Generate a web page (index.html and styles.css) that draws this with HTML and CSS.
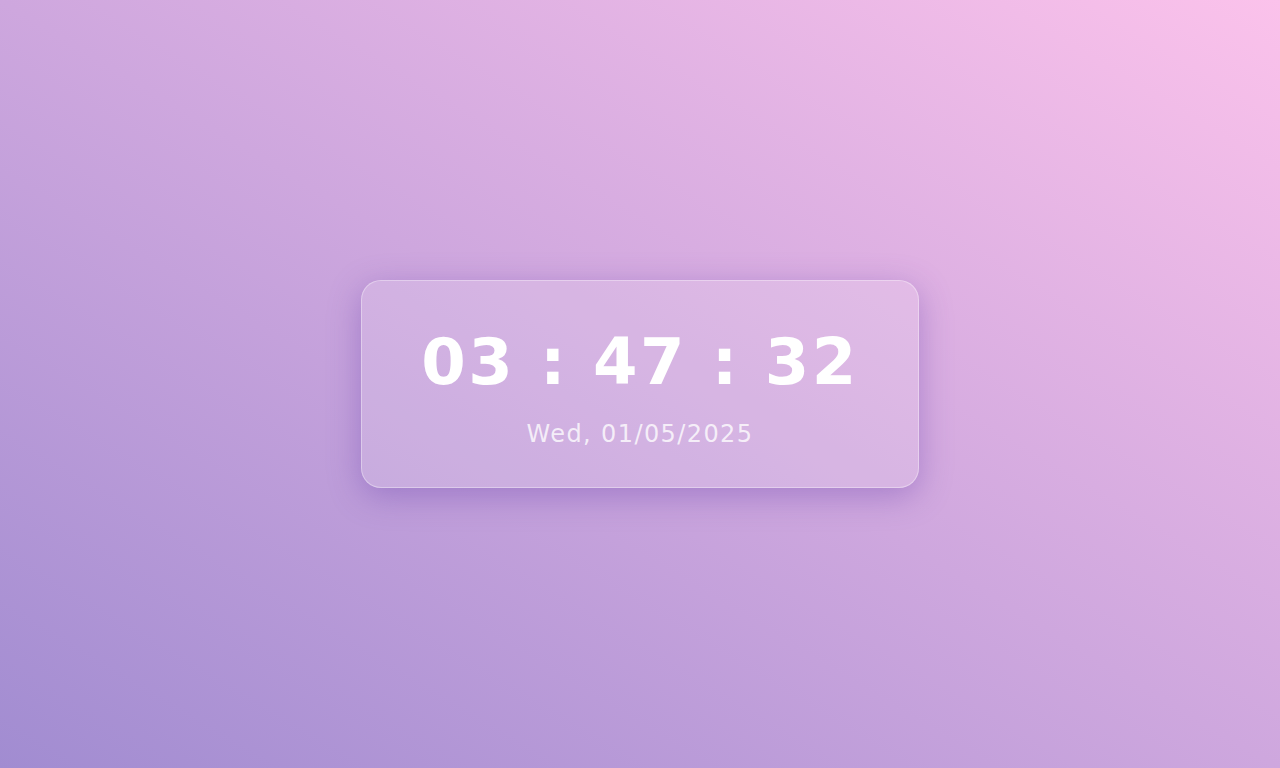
FILE: index.html
```html
<!DOCTYPE html>
<html lang="en">
<head>
<meta charset="utf-8">
<title>Clock</title>
<link rel="stylesheet" href="styles.css">
</head>
<body>
<main class="page">
  <section class="card">
    <div class="time">03 : 47 : 32</div>
    <div class="date">Wed, 01/05/2025</div>
  </section>
</main>
</body>
</html>
```

FILE: styles.css
```css
html, body {
  margin: 0;
  padding: 0;
  height: 100%;
}
body {
  font-family: "DejaVu Sans", Verdana, sans-serif;
  background: linear-gradient(to top right, #a18cd1, #fbc2eb);
}
.page {
  height: 100vh;
  display: flex;
  align-items: center;
  justify-content: center;
}
.card {
  box-sizing: border-box;
  width: 558px;
  height: 208px;
  padding: 44px 0 0;
  border-radius: 20px;
  border: 1px solid rgba(255, 255, 255, 0.35);
  background: rgba(255, 255, 255, 0.15);
  box-shadow: 0 8px 32px rgba(100, 60, 170, 0.38);
  display: flex;
  flex-direction: column;
  align-items: center;
}
.time {
  font-size: 64px;
  font-weight: bold;
  color: #ffffff;
  letter-spacing: 2.5px;
  line-height: normal;
}
.date {
  margin-top: 21px;
  font-size: 24px;
  color: rgba(255, 255, 255, 0.78);
  letter-spacing: 1.4px;
  line-height: normal;
}
```
